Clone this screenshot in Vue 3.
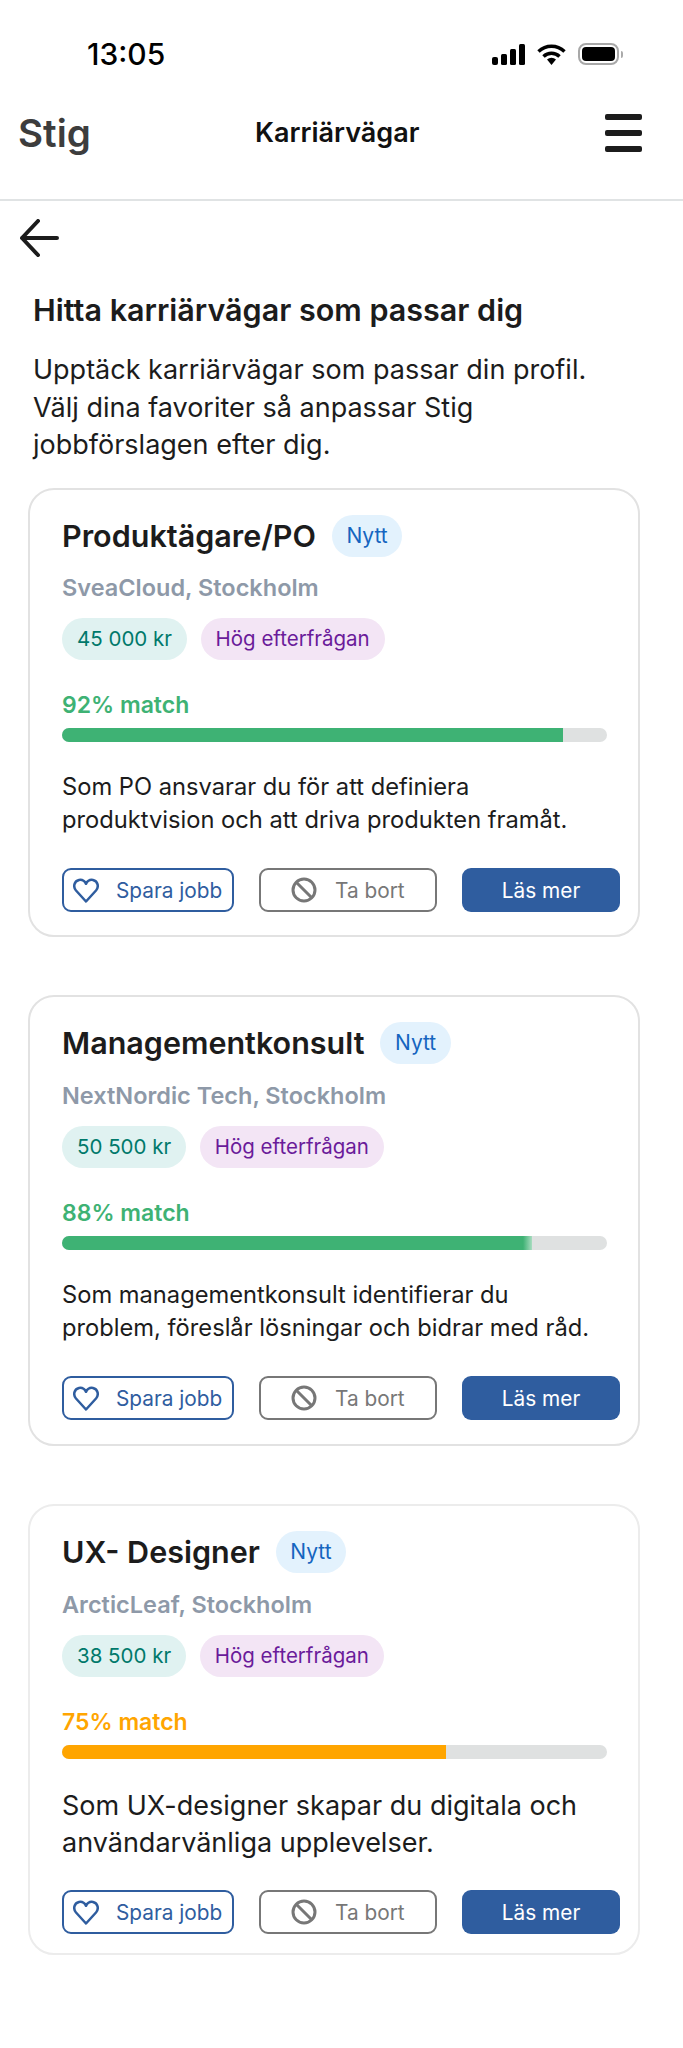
<template>
  <div class="screen">
    <div class="status">
      <span class="time">13:05</span>
      <div class="status-icons">
        <svg width="33" height="21" viewBox="0 0 33 21">
          <rect x="0" y="13" width="6" height="8" rx="2" fill="#000" />
          <rect x="9" y="10" width="6" height="11" rx="1.5" fill="#000" />
          <rect x="18" y="5" width="6" height="16" rx="1.5" fill="#000" />
          <rect x="27" y="0" width="6" height="21" rx="1.5" fill="#000" />
        </svg>
        <svg width="29" height="21" viewBox="0 0 29 21">
          <path d="M1.5 7.5 A19 19 0 0 1 27.5 7.5" fill="none" stroke="#000" stroke-width="3.5" />
          <path d="M6.5 12.5 A11.5 11.5 0 0 1 22.5 12.5" fill="none" stroke="#000" stroke-width="3.5" />
          <path d="M10 15.5 A6.5 6.5 0 0 1 19 15.5 L14.5 21 Z" fill="#000" />
        </svg>
        <div class="battery"><div class="battery-fill"></div></div>
        <div class="battery-cap"></div>
      </div>
    </div>

    <header class="nav">
      <span class="logo">Stig</span>
      <span class="nav-title">Karriärvägar</span>
      <div class="burger"><i></i><i></i><i></i></div>
    </header>

    <main class="content">
      <svg class="back" width="40" height="38" viewBox="0 0 40 38">
        <path d="M38 19 H3 M19 2 L3 19 L19 36" fill="none" stroke="#1c1c1c" stroke-width="4" stroke-linecap="round" stroke-linejoin="round" />
      </svg>

      <div class="intro">
        <h1>Hitta karriärvägar som passar dig</h1>
        <p>Upptäck karriärvägar som passar din profil.<br />Välj dina favoriter så anpassar Stig<br />jobbförslagen efter dig.</p>
      </div>

      <article v-for="job in jobs" :key="job.title" class="card" :class="{ roomy: job.large }">
        <div class="title-row">
          <h2>{{ job.title }}</h2>
          <span class="new">Nytt</span>
        </div>
        <div class="company">{{ job.company }}</div>
        <div class="chips">
          <span class="chip salary">{{ job.salary }}</span>
          <span class="chip demand">Hög efterfrågan</span>
        </div>
        <div class="match" :class="job.tone">{{ job.match }}% match</div>
        <div class="bar">
          <div class="bar-fill" :class="[job.tone, { soft: job.soft }]" :style="{ width: job.fill + '%' }"></div>
        </div>
        <p class="desc">{{ job.line1 }}<br />{{ job.line2 }}</p>
        <div class="actions">
          <button class="btn save">
            <svg width="26" height="25" viewBox="0 0 26 25">
              <path d="M13 23.5 L3 12.5 C0 9 0.8 3.2 6 2 C9 1.4 11.5 3 13 5.8 C14.5 3 17 1.4 20 2 C25.2 3.2 26 9 23 12.5 Z" fill="none" stroke="#2f5d9f" stroke-width="2.5" stroke-linejoin="round" />
            </svg>
            Spara jobb
          </button>
          <button class="btn remove">
            <svg width="26" height="26" viewBox="0 0 26 26">
              <circle cx="13" cy="13" r="11" fill="none" stroke="#777" stroke-width="3" />
              <path d="M5.5 5.5 L20.5 20.5" stroke="#777" stroke-width="3" />
            </svg>
            Ta bort
          </button>
          <button class="btn more">Läs mer</button>
        </div>
      </article>
    </main>
  </div>
</template>

<script setup>
const jobs = [
  {
    title: 'Produktägare/PO',
    company: 'SveaCloud, Stockholm',
    salary: '45 000 kr',
    match: 92,
    fill: 92,
    tone: 'good',
    line1: 'Som PO ansvarar du för att definiera',
    line2: 'produktvision och att driva produkten framåt.'
  },
  {
    title: 'Managementkonsult',
    company: 'NextNordic Tech, Stockholm',
    salary: '50 500 kr',
    match: 88,
    fill: 86.3,
    soft: true,
    tone: 'good',
    line1: 'Som managementkonsult identifierar du',
    line2: 'problem, föreslår lösningar och bidrar med råd.'
  },
  {
    title: 'UX- Designer',
    company: 'ArcticLeaf, Stockholm',
    salary: '38 500 kr',
    match: 75,
    fill: 70.5,
    tone: 'ok',
    large: true,
    line1: 'Som UX-designer skapar du digitala och',
    line2: 'användarvänliga upplevelser.'
  }
]
</script>

<style>
html, body { margin: 0; background: #fff; }
</style>

<style scoped>
.screen {
  width: 683px;
  height: 2048px;
  background: #fff;
  font-family: Inter, "Liberation Sans", sans-serif;
  color: #1c1c1c;
  overflow: hidden;
}

.status {
  height: 66px;
  padding: 36px 60px 0 87px;
  box-sizing: border-box;
  display: flex;
  justify-content: space-between;
  align-items: flex-start;
}
.time { font-size: 30px; font-weight: 500; line-height: 36px; color: #000; }
.status-icons { display: flex; align-items: center; gap: 12px; margin-top: 7px; }
.battery {
  width: 41px;
  height: 22px;
  border: 2px solid #a8a8a8;
  border-radius: 8px;
  padding: 2px;
  box-sizing: border-box;
}
.battery-fill { height: 100%; background: #000; border-radius: 4px; }
.battery-cap { width: 2px; height: 7px; background: #aaa; margin-left: -10px; border-radius: 0 2px 2px 0; }

.nav {
  height: 135px;
  box-sizing: border-box;
  border-bottom: 2px solid #e0e3e4;
  padding: 0 41px 0 18px;
  display: grid;
  grid-template-columns: 237px auto 1fr;
  align-items: center;
}
.logo { font-size: 38.5px; font-weight: 600; color: #3d3d3d; }
.nav-title { font-size: 27px; font-weight: 600; color: #111; }
.burger { justify-self: end; display: flex; flex-direction: column; gap: 10px; }
.burger i { display: block; width: 37px; height: 6px; border-radius: 2px; background: #1c1c1c; }

.content { padding: 18px 0 0; }
.back { display: block; margin-left: 19px; }

.intro { padding: 0 33px; }
h1 { margin: 33px 0 0; font-size: 30.5px; line-height: 40px; font-weight: 600; color: #1c1c1c; }
.intro p { margin: 21px 0 0; font-size: 27px; line-height: 37.5px; color: #1c1c1c; }

.card {
  width: 612px;
  box-sizing: border-box;
  margin: 24.5px 0 0 28px;
  padding: 24px 0 23px 32px;
  border: 2px solid #e2e2e2;
  border-radius: 26px;
}
.card + .card { margin-top: 58px; padding-bottom: 24px; }
.card + .card .company { margin-top: 16px; }
.card.roomy { padding-bottom: 19px; border-color: #ececec; }

.title-row { display: flex; align-items: center; gap: 16px; }
h2 { margin: 0; font-size: 30.5px; line-height: 44px; font-weight: 600; color: #1c1c1c; }
.new {
  padding: 0 14.5px;
  height: 42px;
  line-height: 42px;
  border-radius: 21px;
  background: #e3f2fd;
  color: #1565c0;
  font-size: 21px;
}
.company { margin-top: 15px; font-size: 23.5px; line-height: 30px; font-weight: 600; color: #8e99a8; }
.chips { display: flex; gap: 13.5px; margin-top: 15px; }
.chip { height: 42px; line-height: 42px; padding: 0 15px; border-radius: 21px; font-size: 20.5px; }
.salary { background: #e0f2f1; color: #00796b; }
.demand { background: #f3e5f5; color: #6a1b9a; }

.match { margin-top: 30px; font-size: 23px; line-height: 30px; font-weight: 600; }
.match.good { color: #3eb274; }
.match.ok { color: #ffa500; }
.bar { margin-top: 8px; width: 545px; height: 14px; border-radius: 7px; background: #dfe1e1; overflow: hidden; }
.bar-fill { height: 100%; }
.bar-fill.good { background: #3eb274; }
.bar-fill.ok { background: #ffa500; }
.bar-fill.soft { background: linear-gradient(to right, #3eb274 calc(100% - 9px), #a9dcc0 100%); }

.desc { margin: 28px 0 0; font-size: 23.7px; line-height: 33px; color: #1c1c1c; }
.roomy .desc { font-size: 27px; line-height: 37px; }

.actions { display: flex; gap: 25px; margin-top: 32px; }
.roomy .actions { margin-top: 29px; }
.btn {
  height: 44px;
  box-sizing: border-box;
  border-radius: 9px;
  font-family: inherit;
  font-size: 20.8px;
  display: flex;
  align-items: center;
  padding: 0;
}
.save { width: 172px; border: 2px solid #2f5d9f; background: #fff; color: #2f5d9f; gap: 17px; padding-left: 9px; }
.remove { width: 178px; border: 2px solid #777; background: #fff; color: #777; gap: 18px; padding-left: 30px; }
.more { width: 158px; border: none; background: #2f5d9f; color: #fff; justify-content: center; }
</style>
